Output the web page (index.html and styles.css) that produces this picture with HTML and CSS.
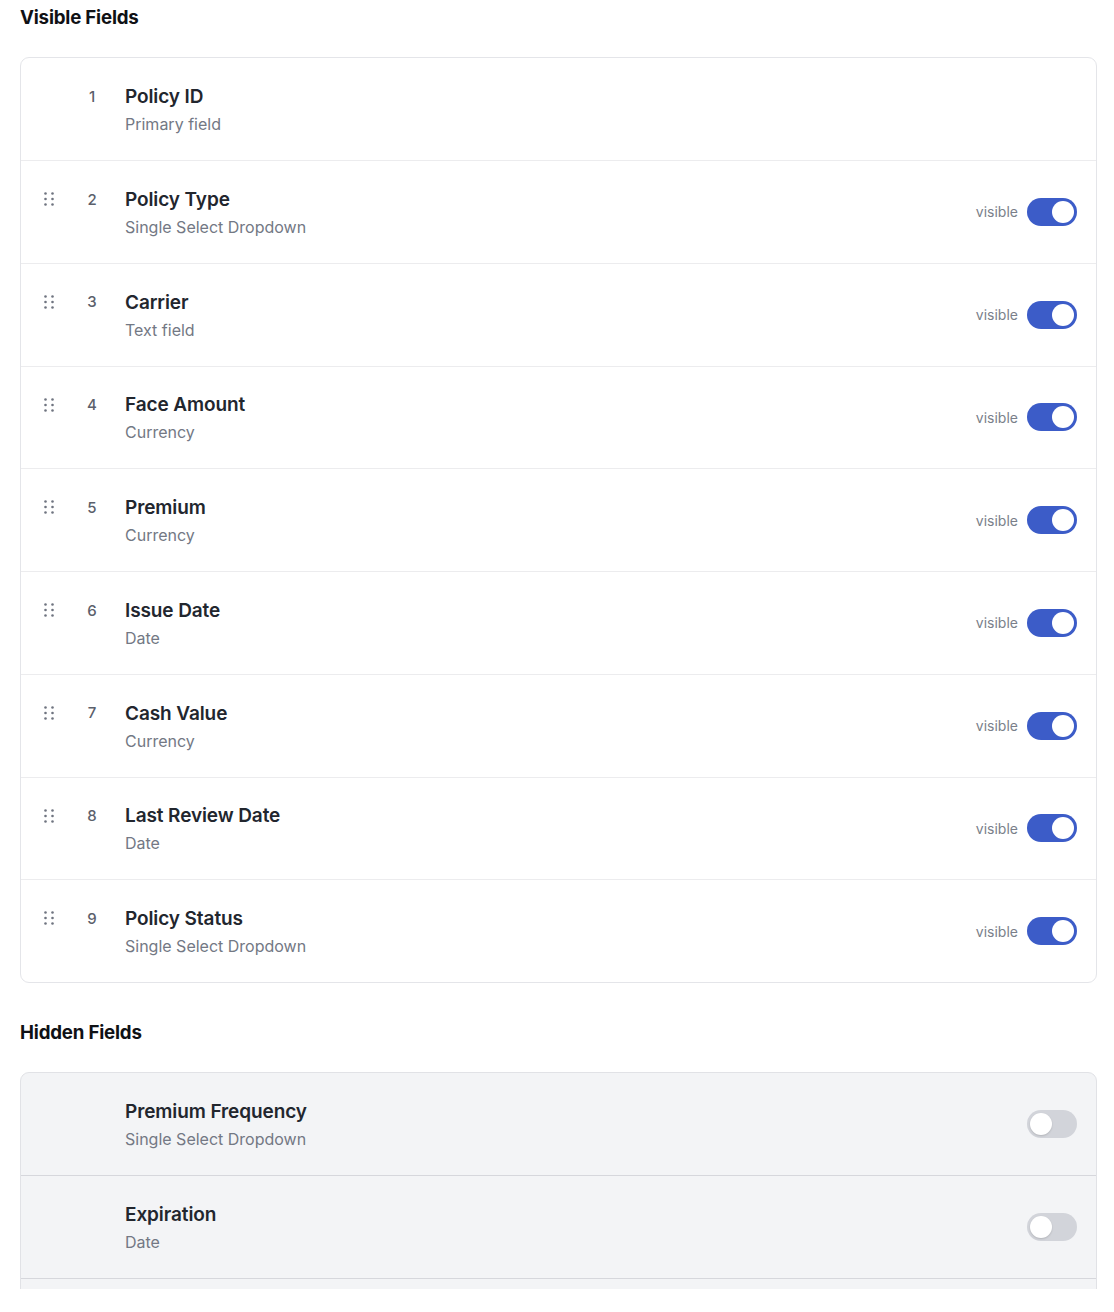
FILE: index.html
```html
<!DOCTYPE html>
<html lang="en">
<head>
<meta charset="utf-8">
<title>Fields</title>
<link rel="stylesheet" href="styles.css">
</head>
<body>
<div class="page">
  <h2 class="section-title">Visible Fields</h2>
  <div class="card">
    <div class="row">
      <div class="lead"><span class="handle-space"></span><span class="num">1</span></div>
      <div class="info"><div class="name">Policy ID</div><div class="type">Primary field</div></div>
    </div>
    <div class="row">
      <div class="lead"><svg class="handle" viewBox="0 0 10 14"><circle cx="1.5" cy="1.5" r="1.3"/><circle cx="8.5" cy="1.5" r="1.3"/><circle cx="1.5" cy="7" r="1.3"/><circle cx="8.5" cy="7" r="1.3"/><circle cx="1.5" cy="12.5" r="1.3"/><circle cx="8.5" cy="12.5" r="1.3"/></svg><span class="num">2</span></div>
      <div class="info"><div class="name">Policy Type</div><div class="type">Single Select Dropdown</div></div>
      <div class="ctrl"><span class="label">visible</span><span class="toggle on"><span class="knob"></span></span></div>
    </div>
    <div class="row">
      <div class="lead"><svg class="handle" viewBox="0 0 10 14"><circle cx="1.5" cy="1.5" r="1.3"/><circle cx="8.5" cy="1.5" r="1.3"/><circle cx="1.5" cy="7" r="1.3"/><circle cx="8.5" cy="7" r="1.3"/><circle cx="1.5" cy="12.5" r="1.3"/><circle cx="8.5" cy="12.5" r="1.3"/></svg><span class="num">3</span></div>
      <div class="info"><div class="name">Carrier</div><div class="type">Text field</div></div>
      <div class="ctrl"><span class="label">visible</span><span class="toggle on"><span class="knob"></span></span></div>
    </div>
    <div class="row">
      <div class="lead"><svg class="handle" viewBox="0 0 10 14"><circle cx="1.5" cy="1.5" r="1.3"/><circle cx="8.5" cy="1.5" r="1.3"/><circle cx="1.5" cy="7" r="1.3"/><circle cx="8.5" cy="7" r="1.3"/><circle cx="1.5" cy="12.5" r="1.3"/><circle cx="8.5" cy="12.5" r="1.3"/></svg><span class="num">4</span></div>
      <div class="info"><div class="name">Face Amount</div><div class="type">Currency</div></div>
      <div class="ctrl"><span class="label">visible</span><span class="toggle on"><span class="knob"></span></span></div>
    </div>
    <div class="row">
      <div class="lead"><svg class="handle" viewBox="0 0 10 14"><circle cx="1.5" cy="1.5" r="1.3"/><circle cx="8.5" cy="1.5" r="1.3"/><circle cx="1.5" cy="7" r="1.3"/><circle cx="8.5" cy="7" r="1.3"/><circle cx="1.5" cy="12.5" r="1.3"/><circle cx="8.5" cy="12.5" r="1.3"/></svg><span class="num">5</span></div>
      <div class="info"><div class="name">Premium</div><div class="type">Currency</div></div>
      <div class="ctrl"><span class="label">visible</span><span class="toggle on"><span class="knob"></span></span></div>
    </div>
    <div class="row">
      <div class="lead"><svg class="handle" viewBox="0 0 10 14"><circle cx="1.5" cy="1.5" r="1.3"/><circle cx="8.5" cy="1.5" r="1.3"/><circle cx="1.5" cy="7" r="1.3"/><circle cx="8.5" cy="7" r="1.3"/><circle cx="1.5" cy="12.5" r="1.3"/><circle cx="8.5" cy="12.5" r="1.3"/></svg><span class="num">6</span></div>
      <div class="info"><div class="name">Issue Date</div><div class="type">Date</div></div>
      <div class="ctrl"><span class="label">visible</span><span class="toggle on"><span class="knob"></span></span></div>
    </div>
    <div class="row">
      <div class="lead"><svg class="handle" viewBox="0 0 10 14"><circle cx="1.5" cy="1.5" r="1.3"/><circle cx="8.5" cy="1.5" r="1.3"/><circle cx="1.5" cy="7" r="1.3"/><circle cx="8.5" cy="7" r="1.3"/><circle cx="1.5" cy="12.5" r="1.3"/><circle cx="8.5" cy="12.5" r="1.3"/></svg><span class="num">7</span></div>
      <div class="info"><div class="name">Cash Value</div><div class="type">Currency</div></div>
      <div class="ctrl"><span class="label">visible</span><span class="toggle on"><span class="knob"></span></span></div>
    </div>
    <div class="row">
      <div class="lead"><svg class="handle" viewBox="0 0 10 14"><circle cx="1.5" cy="1.5" r="1.3"/><circle cx="8.5" cy="1.5" r="1.3"/><circle cx="1.5" cy="7" r="1.3"/><circle cx="8.5" cy="7" r="1.3"/><circle cx="1.5" cy="12.5" r="1.3"/><circle cx="8.5" cy="12.5" r="1.3"/></svg><span class="num">8</span></div>
      <div class="info"><div class="name">Last Review Date</div><div class="type">Date</div></div>
      <div class="ctrl"><span class="label">visible</span><span class="toggle on"><span class="knob"></span></span></div>
    </div>
    <div class="row">
      <div class="lead"><svg class="handle" viewBox="0 0 10 14"><circle cx="1.5" cy="1.5" r="1.3"/><circle cx="8.5" cy="1.5" r="1.3"/><circle cx="1.5" cy="7" r="1.3"/><circle cx="8.5" cy="7" r="1.3"/><circle cx="1.5" cy="12.5" r="1.3"/><circle cx="8.5" cy="12.5" r="1.3"/></svg><span class="num">9</span></div>
      <div class="info"><div class="name">Policy Status</div><div class="type">Single Select Dropdown</div></div>
      <div class="ctrl"><span class="label">visible</span><span class="toggle on"><span class="knob"></span></span></div>
    </div>
  </div>

  <h2 class="section-title hidden-title">Hidden Fields</h2>
  <div class="card hidden-card">
    <div class="row">
      <div class="lead"><span class="handle-space"></span><span class="num"></span></div>
      <div class="info"><div class="name">Premium Frequency</div><div class="type">Single Select Dropdown</div></div>
      <div class="ctrl"><span class="toggle off"><span class="knob"></span></span></div>
    </div>
    <div class="row">
      <div class="lead"><span class="handle-space"></span><span class="num"></span></div>
      <div class="info"><div class="name">Expiration</div><div class="type">Date</div></div>
      <div class="ctrl"><span class="toggle off"><span class="knob"></span></span></div>
    </div>
    <div class="row"></div>
  </div>
</div>
</body>
</html>
```

FILE: styles.css
```css
* { box-sizing: border-box; }
html, body { margin: 0; padding: 0; background: #ffffff; }
body {
  font-family: Inter, "Noto Sans", "Liberation Sans", sans-serif;
  color: #1f2329;
}
.page {
  padding: 5px 17px 0 20px;
  height: 1289px;
  overflow: hidden;
}
.section-title {
  margin: 0 0 26px 0;
  font-size: 18.7px;
  line-height: 26px;
  font-weight: 700;
  color: #0f1115;
  letter-spacing: -0.2px;
}
.hidden-title {
  margin-top: 37px;
}
.card {
  border: 1px solid #e4e5e9;
  border-radius: 9px;
  background: #ffffff;
  overflow: hidden;
}
.row {
  display: flex;
  align-items: center;
  height: 102.75px;
  padding: 24px 19px 24px 0;
  border-top: 1px solid #ececee;
}
.row:first-child { border-top: none; height: 102px; }
.hidden-card { background: #f3f4f6; border-color: #e1e2e6; }
.hidden-card .row { border-top-color: #d6d7dc; }
.hidden-card .row:first-child { border-top: none; }
.lead {
  align-self: flex-start;
  display: flex;
  align-items: center;
  height: 28px;
}
.handle, .handle-space {
  display: block;
  width: 10px;
  height: 14px;
  margin-left: 23px;
  fill: #6f7480;
}
.num {
  width: 24px;
  margin-left: 26px;
  text-align: center;
  font-size: 15px;
  font-weight: 500;
  color: #5b606b;
}
.info {
  flex: 1;
  margin-left: 21px;
}
.name {
  font-size: 19px;
  line-height: 30px;
  font-weight: 600;
  color: #22262e;
  letter-spacing: -0.1px;
}
.type {
  font-size: 16px;
  line-height: 24px;
  color: #737884;
}
.ctrl {
  display: flex;
  align-items: center;
  gap: 9px;
}
.label {
  font-size: 14px;
  color: #7a7f8a;
}
.toggle {
  display: flex;
  align-items: center;
  width: 50px;
  height: 28px;
  border-radius: 14px;
  padding: 3px;
}
.toggle .knob {
  width: 22px;
  height: 22px;
  border-radius: 50%;
  background: #ffffff;
}
.toggle.on {
  background: #3c5cc8;
  justify-content: flex-end;
}
.toggle.off {
  background: #d2d4da;
  justify-content: flex-start;
}
.toggle.off .knob {
  box-shadow: 0 1px 2px rgba(0, 0, 0, 0.15);
}
```
